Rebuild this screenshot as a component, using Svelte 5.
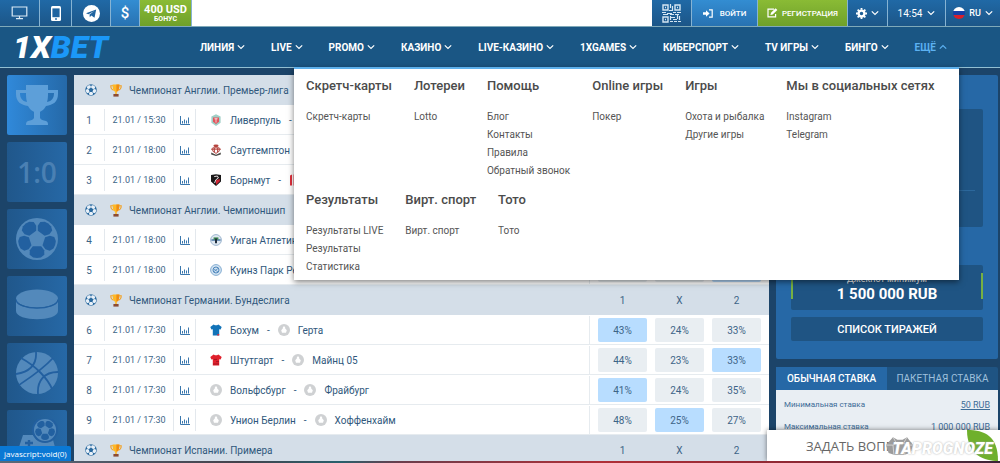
<script lang="ts">
  type Team = { name: string; icon: string };
  type Match = { n: number; time: string; home: Team; away: Team | null; odds: string[]; pick: number };
  type League = { title: string; matches: Match[] };

  const nav = ["ЛИНИЯ", "LIVE", "PROMO", "КАЗИНО", "LIVE-КАЗИНО", "1XGAMES", "КИБЕРСПОРТ", "TV ИГРЫ", "БИНГО"];

  const menu = [
    [
      { title: "Скретч-карты", links: ["Скретч-карты"] },
      { title: "Лотереи", links: ["Lotto"] },
      { title: "Помощь", links: ["Блог", "Контакты", "Правила", "Обратный звонок"] },
      { title: "Online игры", links: ["Покер"] },
      { title: "Игры", links: ["Охота и рыбалка", "Другие игры"] },
      { title: "Мы в социальных сетях", links: ["Instagram", "Telegram"] },
    ],
    [
      { title: "Результаты", links: ["Результаты LIVE", "Результаты", "Статистика"] },
      { title: "Вирт. спорт", links: ["Вирт. спорт"] },
      { title: "Тото", links: ["Тото"] },
    ],
  ];

  const tiles = ["cup", "score", "football", "puck", "basketball", "gamepad"];

  const none = ["", "", ""];
  const team = (name: string, icon = "blank"): Team => ({ name, icon });

  const leagues: League[] = [
    {
      title: "Чемпионат Англии. Премьер-лига",
      matches: [
        { n: 1, time: "21.01 / 15:30", home: team("Ливерпуль", "liverpool"), away: team(""), odds: none, pick: 0 },
        { n: 2, time: "21.01 / 18:00", home: team("Саутгемптон", "southampton"), away: null, odds: none, pick: 2 },
        { n: 3, time: "21.01 / 18:00", home: team("Борнмут", "bournemouth"), away: team("", "stripes"), odds: none, pick: 2 },
      ],
    },
    {
      title: "Чемпионат Англии. Чемпионшип",
      matches: [
        { n: 4, time: "21.01 / 18:00", home: team("Уиган Атлетик", "wigan"), away: null, odds: none, pick: 2 },
        { n: 5, time: "21.01 / 18:00", home: team("Куинз Парк Рейнджерс", "qpr"), away: null, odds: none, pick: 2 },
      ],
    },
    {
      title: "Чемпионат Германии. Бундеслига",
      matches: [
        { n: 6, time: "21.01 / 17:30", home: team("Бохум", "blue"), away: team("Герта"), odds: ["43%", "24%", "33%"], pick: 0 },
        { n: 7, time: "21.01 / 17:30", home: team("Штутгарт", "red"), away: team("Майнц 05"), odds: ["44%", "23%", "33%"], pick: 2 },
        { n: 8, time: "21.01 / 17:30", home: team("Вольфсбург"), away: team("Фрайбург"), odds: ["41%", "24%", "35%"], pick: 0 },
        { n: 9, time: "21.01 / 17:30", home: team("Унион Берлин"), away: team("Хоффенхайм"), odds: ["48%", "25%", "27%"], pick: 1 },
      ],
    },
    { title: "Чемпионат Испании. Примера", matches: [] },
  ];

  const outcomes = ["1", "X", "2"];
  const turns = [36, 108, 180, 252, 324];
</script>

{#snippet chevron(up = false)}
  <svg class="chevron" class:up viewBox="0 0 8 8" aria-hidden="true"><path d="M.8 2.4 4 5.5 7.2 2.4" /></svg>
{/snippet}

{#snippet ball(line: string, patch: string)}
  <circle cx="12" cy="12" r="12" fill={line} />
  {#each turns as turn (turn)}
    <path
      d="M-2.4-4.1-4.1-6.4-4.2-9-2.2-10.6 0-10.9 2.2-10.6 4.2-9 4.1-6.4 2.4-4.1Z"
      transform="translate(12 12) rotate({turn})"
      fill={patch}
    />
  {/each}
{/snippet}

{#snippet crest(kind: string)}
  <svg class="crest" viewBox="0 0 12 12" aria-hidden="true">
    {#if kind === "blue" || kind === "red"}
      <path
        d="M3.6.6 5 1.2h2L8.4.6 11.7 3 10.6 5.6 9.2 5.2v6.4H2.8V5.2l-1.4.4L.3 3Z"
        fill={kind === "blue" ? "#1273b8" : "#e0202c"}
      />
      {#if kind === "blue"}
        <path d="M7.6 10h1.6v1.6H7Z" fill="#d8303a" />
      {:else}
        <path d="M4 5.4h3M6 7.6h3M3 10h6" stroke="#8e0f1c" stroke-width=".7" />
      {/if}
    {:else if kind === "liverpool"}
      <path d="M1.4 2.4 6 .3l4.6 2.1v6.4L6 12 1.4 8.8Z" fill="#9fcfc6" />
      <path d="M3 3.4h6v4.4L6 10 3 7.8Z" fill="#e2545c" />
      <path d="M4.4 4.8h3.2M6 4.4v4.2" stroke="#fff" stroke-width=".7" />
    {:else if kind === "southampton"}
      <ellipse cx="6" cy="1.8" rx="2.6" ry="1.4" fill="#b5433d" />
      <path d="M2.8 3.8h6.4v3.4L6 9.4 2.8 7.2Z" fill="#fff" stroke="#b4443f" stroke-width="1" />
      <path d="M1 5.2h10M4.4 4v4M7.6 4v4" stroke="#b4443f" stroke-width="1" />
      <path d="M1.2 8.6 6 10.8l4.8-2.2v2L6 12l-4.8-1.4Z" fill="#4d4b48" />
    {:else if kind === "bournemouth"}
      <path d="M1 1 6 .2 11 1v6.4L6 12 1 7.4Z" fill="#191819" />
      <path d="M6 6.2 9.8 5v2.2L6 11Z" fill="#cf2636" />
      <path d="M4.2 2.6 7.4 2l1 2-2.6 1.8L4.6 9" fill="none" stroke="#e8dfe0" stroke-width="1" />
    {:else if kind === "stripes"}
      <path d="M1 1.5 3 .6v10.8H1ZM4.6.6h2v10.8h-2ZM8.4.6l2 .9v9.9h-2Z" fill="#e0303c" />
    {:else if kind === "wigan"}
      <circle cx="6" cy="6" r="5.4" fill="#dfe8f1" stroke="#9db6cf" />
      <path d="M1.4 5h9.2v2H1.4Z" fill="#6f93b8" />
      <path d="M3.6 3.4h4.8v2.4H3.6Z" fill="#3c8752" />
      <path d="M5 4.4h2v4.8H5Z" fill="#202f3f" />
    {:else if kind === "qpr"}
      <circle cx="6" cy="6" r="5.4" fill="#d2e3f2" stroke="#86aed2" />
      <circle cx="6" cy="6" r="3" fill="none" stroke="#4d86bb" />
      <path d="m4 5 4 3M4 7.6 8 4.4" stroke="#4d86bb" stroke-width=".8" />
    {:else}
      <circle cx="6" cy="6" r="6" fill="#cfd1d3" />
      <path d="M6 2 7.2 3.4v1.2l1.6 1.6-.8 2.6H4L3.2 6.2l1.6-1.6V3.4Z" fill="#fff" />
    {/if}
  </svg>
{/snippet}

<div class="page">
  <div class="top">
    <button class="cell w-pc" aria-label="Desktop">
      <svg width="17" height="14" viewBox="0 0 17 14"><path d="M1.2 1h14.6v9H1.2ZM8.5 10v2.4M5 12.6h7" fill="none" stroke="#d9e9f5" stroke-width="1.2" /></svg>
    </button>
    <button class="cell w-phone" aria-label="Mobile">
      <svg width="10" height="15" viewBox="0 0 10 15"><rect width="10" height="15" rx="1.5" fill="#fff" /><path d="M1.4 2.4h7.2v8.8H1.4Z" fill="#1f64a0" /><circle cx="5" cy="13" r=".9" fill="#1f64a0" /></svg>
    </button>
    <button class="cell w-tg" aria-label="Telegram">
      <svg width="17" height="17" viewBox="0 0 17 17"><circle cx="8.5" cy="8.5" r="8.5" fill="#fff" /><path d="M3 8.3 13.2 4.4 11.5 12.8 8.3 10.6 6.8 12.2 6.5 9.6 11.4 5.9 5.4 9.2Z" fill="#1f64a0" /></svg>
    </button>
    <button class="cell w-usd bright">$</button>
    <a class="cell w-bonus green bonus" href="#bonus"><b>400 USD</b><small>БОНУС</small></a>
    <div class="blank"></div>
    <button class="cell w-qr" aria-label="QR">
      <svg width="19" height="19" viewBox="0 0 19 19" fill="none" stroke="#d5e6f2">
        <path d="M1 1h5v5H1ZM13 1h5v5h-5ZM1 13h5v5H1Z" stroke-width="1.4" />
        <path d="M3 3.5h1M15 3.5h1M3 15.5h1" stroke-width="1.4" />
        <path d="M8.5 0v4M10.5 2v5M7 6.5h3M0 8.5h4M5 9.5h5M11 8.5h3M15 8.5h4M1 10.5h5M8 10.5h4M13 10.5h4M8.5 12v4M9 13.5h4M8 17.5h3M11 15.5h4M15.5 11v4M17.5 12v4M12 17.5h3M16 17.5h3" stroke-width="1.2" />
      </svg>
    </button>
    <button class="cell w-login bright">
      <svg width="10" height="9" viewBox="0 0 10 9"><path d="M0 3.2h3V1.2L6.6 4.5 3 7.8V5.8H0Z" fill="#fff" /><path d="M6 .8h3.2v7.4H6" fill="none" stroke="#fff" stroke-width="1.2" /></svg>
      <span>ВОЙТИ</span>
    </button>
    <button class="cell w-reg green">
      <svg width="11" height="10" viewBox="0 0 11 10"><path d="M7 1.2H1v7.6h7.6V6" fill="none" stroke="#fff" stroke-width="1.2" /><path d="M3.4 7 4 4.8 8.6.2l1.8 1.8-4.8 4.4Z" fill="#fff" /></svg>
      <span>РЕГИСТРАЦИЯ</span>
    </button>
    <button class="cell w-gear" aria-label="Настройки">
      <svg width="11" height="11" viewBox="0 0 12 12"><circle cx="6" cy="6" r="3.2" fill="none" stroke="#fff" stroke-width="2.6" /><path d="M6 0v2M6 10v2M0 6h2M10 6h2M1.8 1.8l1.4 1.4M8.8 8.8l1.4 1.4M1.8 10.2l1.4-1.4M8.8 3.2l1.4-1.4" stroke="#fff" stroke-width="2" /></svg>
      {@render chevron()}
    </button>
    <button class="cell w-clock">14:54 {@render chevron()}</button>
    <button class="cell w-lang">
      <svg width="12" height="12" viewBox="0 0 12 12"><clipPath id="flag"><circle cx="6" cy="6" r="6" /></clipPath><g clip-path="url(#flag)"><path d="M0 0h12v4H0Z" fill="#fff" /><path d="M0 4h12v4H0Z" fill="#1740a8" /><path d="M0 8h12v4H0Z" fill="#d8202c" /></g></svg>
      RU {@render chevron()}
    </button>
  </div>

  <header class="header">
    <a class="logo" href="#home"><span>1X</span><span class="logo-blue">BET</span></a>
    <nav class="nav">
      {#each nav as item (item)}
        <a href="#nav">{item}{@render chevron()}</a>
      {/each}
      <a class="open" href="#more">ЕЩЁ{@render chevron(true)}</a>
    </nav>

    <div class="menu">
      {#each menu as row, i (i)}
        <div class="menu-row">
          {#each row as group (group.title)}
            <section>
              <h3>{group.title}</h3>
              <ul>
                {#each group.links as link (link)}
                  <li><a href="#link">{link}</a></li>
                {/each}
              </ul>
            </section>
          {/each}
        </div>
      {/each}
    </div>
  </header>

  <div class="body">
    <aside class="tiles">
      {#each tiles as tile, i (tile)}
        <button class="tile" class:active={i === 0} aria-label={tile}>
          {#if tile === "score"}
            <span>1:0</span>
          {:else}
            <svg width="42" height="42" viewBox="0 0 42 42" aria-hidden="true">
              {#if tile === "cup"}
                <path
                  fill="#5d9fd9"
                  fill-rule="evenodd"
                  d="M10 1h22v5h10v4c0 8-5 11-12 12-2 4-5 5-6 6v6c1 2 3 2 6 3 2 1 2 2 2 4H10c0-2 0-3 2-4 3-1 5-1 6-3v-6c-1-1-4-2-6-6C5 21 0 18 0 10V6h10ZM4 9c0 5 2 8 7 9-1-3-1-6-1-9Zm28 0c0 3 0 6-1 9 5-1 7-4 7-9Z"
                />
              {:else if tile === "football"}
                <g transform="scale(1.75)">{@render ball("#5389bb", "#2260a0")}</g>
              {:else if tile === "puck"}
                <path d="M0 15v11c0 11 42 11 42 0V15c-1 11-41 11-42 0Z" fill="#5389bb" />
                <ellipse cx="21" cy="13.5" rx="21" ry="9" fill="#5389bb" />
                <path d="M0 14.5c1 11.5 41 11.5 42 0" fill="none" stroke="#2360a0" stroke-width="1.2" />
              {:else if tile === "basketball"}
                <circle cx="21" cy="21" r="21" fill="#5389bb" />
                <path
                  d="M20 0C21 14 13 20 0 22M5 6C20 14 32 27 36 37M37 6C26 18 12 27 3 33M42 20C28 20 21 29 22 42"
                  fill="none"
                  stroke="#2360a0"
                  stroke-width="1.8"
                />
              {:else}
                <path d="M7 16h10l3 4h10l6-3 4 15c1 7-5 9-9 4l-4-5H15l-4 5c-5 5-10 1-9-5Z" fill="#5389bb" />
                <path d="M13 21v7M9 24h8" stroke="#2360a0" stroke-width="2.4" />
                <circle cx="29" cy="11" r="13" fill="#2360a0" />
                <g transform="translate(18 0) scale(.92)">{@render ball("#5389bb", "#2260a0")}</g>
              {/if}
            </svg>
          {/if}
        </button>
      {/each}
    </aside>

    <main class="coupon">
      <table>
        <colgroup>
          <col class="c-num" /><col class="c-time" /><col class="c-stat" /><col />
          <col class="c-side" /><col class="c-mid" /><col class="c-side" />
        </colgroup>
        {#each leagues as league (league.title)}
          <tbody>
            <tr class="league">
              <th colspan="4" scope="rowgroup">
                <div class="league-name">
                  <svg width="12" height="12" viewBox="-.5 -.5 25 25" aria-hidden="true">{@render ball("#28699f", "#e8f0f8")}</svg>
                  <svg width="12" height="13" viewBox="0 0 12 13" aria-hidden="true">
                    <path d="M3 1.8H.8c0 3 1 4 2.8 4.4M9 1.8h2.2c0 3-1 4-2.8 4.4" fill="none" stroke="#f4a01e" stroke-width="1.1" />
                    <path d="M2.6.4h6.8c0 4-.6 6.6-2.6 7.4v2.4H5.2V7.8C3.2 7 2.6 4.4 2.6.4Z" fill="#fdb827" />
                    <path d="M6.4.4h3c0 4-.6 6.6-3 7.4Z" fill="#f08c15" />
                    <path d="M3.4 10h5.2v2.6H3.4Z" fill="#8a4b34" />
                  </svg>
                  <span>{league.title}</span>
                </div>
              </th>
              {#each outcomes as outcome (outcome)}
                <th class="odd">{outcome}</th>
              {/each}
            </tr>
            {#each league.matches as match (match.n)}
              <tr>
                <td><div class="rule">{match.n}</div></td>
                <td><div class="rule time">{match.time}</div></td>
                <td>
                  <div class="rule">
                    <svg width="10" height="9" viewBox="0 0 10 9" aria-hidden="true"><path d="M.5 0v8.5H10M2.5 5v2.5M4.5 3.5v4M6.5 4.5v3M8.5 1.5v6" fill="none" stroke="#3a77ad" /></svg>
                  </div>
                </td>
                <td>
                  <div class="teams">
                    {@render crest(match.home.icon)}
                    <span>{match.home.name}</span>
                    {#if match.away}
                      <span>-</span>
                      {@render crest(match.away.icon)}
                      <span>{match.away.name}</span>
                    {/if}
                  </div>
                </td>
                {#each match.odds as odd, i (i)}
                  <td class="odd"><button class:picked={i === match.pick} aria-label="{outcomes[i]} {odd}">{odd}</button></td>
                {/each}
              </tr>
            {/each}
          </tbody>
        {/each}
      </table>
    </main>

    <aside class="side">
      <section class="panel">
        <div class="box draw"></div>
        <div class="box jackpot">
          <div class="jackpot-in"><span>Джекпот минимум</span><strong>1 500 000 RUB</strong></div>
        </div>
        <button class="box list">СПИСОК ТИРАЖЕЙ</button>
      </section>
      <section>
        <div class="tabs">
          <button class="current">ОБЫЧНАЯ СТАВКА</button>
          <button>ПАКЕТНАЯ СТАВКА</button>
        </div>
        <dl>
          <div><dt>Минимальная ставка</dt><dd><a href="#min">50 RUB</a></dd></div>
          <div><dt>Максимальная ставка</dt><dd><a href="#max">1 000 000 RUB</a></dd></div>
        </dl>
      </section>
    </aside>
  </div>

  <div class="status">javascript:void(0)</div>
  <div class="chat">
    <button>ЗАДАТЬ ВОПРОС</button>
    <svg class="leaf" width="31" height="31" viewBox="0 0 31 31" aria-hidden="true"><path d="M0 0c18 0 31 6 31 31C18 31 0 26 0 0Z" fill="#6fb02c" /></svg>
    <div class="mark">
      <svg width="28" height="21" viewBox="0 0 32 23" aria-hidden="true">
        <path d="M8 2 13 5h6l5-3 7 9-3 9-7 2H9l-6-2-3-9Z" fill="#9c9c9c" />
        <path d="M8 2l4 7 8 0 4-7M0 11h8l4-2M31 11h-7l-4-2M9 22l-1-11M21 22l3-11" fill="none" stroke="#dadada" />
      </svg>
      <span>TAPROGNOZE</span>
    </div>
  </div>
  <div class="strip"></div>
</div>

<style>
  :global(body) {
    background: #1c4469;
  }
  .page {
    height: 100vh;
    overflow: hidden;
    position: relative;
    font-family: Roboto, "Liberation Sans", sans-serif;
    color: #3d6487;
    background: #1c4469;
  }
  .page * {
    box-sizing: border-box;
  }
  button {
    border: 0;
    padding: 0;
    background: none;
    font: inherit;
    color: inherit;
    cursor: pointer;
  }
  a {
    color: inherit;
    text-decoration: none;
  }
  svg {
    display: block;
    flex: none;
  }

  .top {
    display: flex;
    height: 27px;
    border-bottom: 1px solid #7fa9b9;
    background: #fff;
  }
  .cell {
    display: flex;
    align-items: center;
    justify-content: center;
    gap: 4px;
    flex: none;
    color: #fff;
    font-size: 9px;
    font-weight: 500;
    background: linear-gradient(#2069a6, #1c5688);
    border-right: 1px solid #86b3d3;
  }
  .cell.bright {
    background: linear-gradient(#338dd2, #2872b2);
  }
  .cell.green {
    background: linear-gradient(#8abb35, #6fa02a);
  }
  .w-pc,
  .w-qr,
  .w-gear {
    width: 40px;
  }
  .w-phone {
    width: 32px;
  }
  .w-tg {
    width: 39px;
  }
  .cell.w-usd {
    width: 29px;
    font-size: 15px;
  }
  .w-bonus {
    width: 52px;
  }
  .w-login {
    width: 66px;
  }
  .w-reg {
    width: 90px;
  }
  .cell.w-login,
  .cell.w-reg {
    font-size: 8px;
  }
  .cell.w-login {
    gap: 7px;
  }
  .cell.w-clock {
    width: 58px;
    gap: 5px;
    font-size: 10px;
    font-weight: 400;
  }
  .w-lang {
    width: 54px;
    border-right: 0;
  }
  .bonus {
    flex-direction: column;
    gap: 0;
  }
  .bonus b {
    font-size: 11px;
    line-height: 11px;
  }
  .bonus small {
    font-size: 7px;
    line-height: 8px;
    font-weight: 700;
  }
  .blank {
    flex: 1;
  }
  .chevron {
    width: 8px;
    height: 8px;
    fill: none;
    stroke: currentColor;
    stroke-width: 1.2;
  }
  .chevron.up {
    transform: rotate(180deg);
  }

  .header {
    position: relative;
    z-index: 2;
    display: flex;
    align-items: center;
    height: 41px;
    padding: 0 53px 0 13px;
    background: #1a5684;
    border-bottom: 1px solid #92bfd2;
  }
  .logo {
    font-size: 32px;
    font-weight: 900;
    font-style: italic;
    line-height: 40px;
    color: #fff;
  }
  .logo-blue {
    color: #1b98f8;
  }
  .nav {
    display: flex;
    gap: 26px;
    margin-left: auto;
    font-size: 10px;
    font-weight: 700;
    color: #fff;
  }
  .nav a {
    display: flex;
    align-items: center;
    gap: 3px;
    white-space: nowrap;
  }
  .nav .open {
    color: #5cb1f2;
  }

  .menu {
    position: absolute;
    top: 40px;
    left: 294px;
    right: 41px;
    padding: 8px 12px 4px;
    background: #fff;
    border-top: 2px solid #5db0ec;
    box-shadow: 0 2px 6px rgba(0, 0, 0, 0.5);
    color: #555;
  }
  .menu-row {
    display: flex;
    gap: 22px;
  }
  .menu-row + .menu-row {
    margin-top: 11px;
  }
  h3 {
    margin: 0 0 13px;
    font-size: 13px;
    font-weight: 500;
    line-height: 18px;
    color: #4b4b4b;
    white-space: nowrap;
  }
  ul {
    margin: 0;
    padding: 0;
    list-style: none;
    font-size: 10px;
    line-height: 18px;
    white-space: nowrap;
  }

  .body {
    display: flex;
    gap: 7px;
    padding: 7px 2px 0 7px;
  }
  .tiles {
    display: flex;
    flex-direction: column;
    flex: none;
    gap: 7px;
    width: 60px;
  }
  .tile {
    display: flex;
    align-items: center;
    justify-content: center;
    height: 60px;
    flex: none;
    border-radius: 2px;
    background: linear-gradient(90deg, #20578b, #2668a6);
    color: #4a80b3;
    font-family: "Open Sans", Roboto, sans-serif;
    font-size: 28px;
    font-weight: 600;
  }
  .tile.active {
    background: linear-gradient(90deg, #3089da, #2569a8);
  }

  .coupon {
    flex: 1;
    min-width: 0;
  }
  table {
    width: 100%;
    table-layout: fixed;
    border-collapse: collapse;
    background: #fff;
  }
  .c-num {
    width: 31px;
  }
  .c-time {
    width: 69px;
  }
  .c-stat {
    width: 22px;
  }
  .c-side {
    width: 61px;
  }
  .c-mid {
    width: 57px;
  }
  tr {
    height: 30px;
  }
  td,
  th {
    padding: 0;
    font-size: 10px;
    font-weight: 400;
    text-align: center;
  }
  td {
    box-shadow: inset 0 -1px #e6ebef;
  }
  .league {
    background: #d4dee8;
  }
  .league-name {
    display: flex;
    align-items: center;
    padding-left: 11px;
    white-space: nowrap;
  }
  .league-name svg + svg {
    margin: 0 7px 0 13px;
  }
  .rule {
    display: flex;
    align-items: center;
    justify-content: center;
    height: 22px;
    border-right: 1px solid #e3e8ed;
  }
  .time {
    font-size: 9px;
  }
  .teams {
    display: flex;
    align-items: center;
    gap: 8px;
    height: 29px;
    padding-left: 14px;
    white-space: nowrap;
    overflow: hidden;
    border-right: 1px solid #e6ebef;
  }
  .crest {
    width: 12px;
    height: 12px;
  }
  .league-name,
  .teams {
    color: #30587c;
  }
  .odd {
    padding: 0 4px;
  }
  .odd:nth-last-child(3) {
    padding-left: 8px;
  }
  .odd:last-child {
    padding-right: 8px;
  }
  .odd button {
    display: block;
    width: 100%;
    height: 24px;
    border-radius: 2px;
    background: #e9eef2;
  }
  .odd .picked {
    background: #b8ddff;
  }

  .side {
    flex: none;
    width: 222px;
    display: flex;
    flex-direction: column;
    gap: 8px;
  }
  .panel {
    display: flex;
    flex-direction: column;
    padding: 34px 15px 18px;
    border-radius: 2px;
    background: #2668a6;
    color: #fff;
  }
  .box {
    border-radius: 2px;
    background: #1f5483;
  }
  .draw {
    height: 118px;
    padding: 81px 8px 0;
  }
  .draw::before {
    content: "";
    display: block;
    border-top: 1px solid #2c689c;
  }
  .jackpot {
    margin: 38px 0 7px;
    padding: 8px 0 11px;
  }
  .jackpot-in {
    display: flex;
    flex-direction: column;
    align-items: center;
    height: 26px;
    border: solid #76b043;
    border-width: 0 2px;
    font-size: 9px;
    line-height: 12px;
  }
  .jackpot strong {
    font-size: 15px;
    line-height: 18px;
  }
  .list {
    height: 24px;
    font-size: 11px;
    font-weight: 500;
  }
  .tabs {
    display: flex;
    background: #1f5483;
    border-radius: 2px 2px 0 0;
    font-size: 10px;
    color: #9fc0dc;
  }
  .tabs button {
    flex: 1;
    height: 23px;
    white-space: nowrap;
  }
  .tabs .current {
    background: #2668a6;
    color: #fff;
    font-weight: 500;
  }
  dl {
    margin: 0;
    padding: 4px 8px 20px;
    background: #e9eef3;
    font-size: 8px;
    line-height: 22px;
    color: #3d6c97;
  }
  dl div {
    display: flex;
    justify-content: space-between;
  }
  dd {
    margin: 0;
    font-size: 9px;
  }
  dd a {
    text-decoration: underline;
  }

  .status {
    position: absolute;
    z-index: 3;
    left: 0;
    bottom: 2px;
    padding: 0 4px;
    border-radius: 0 2px 0 0;
    background: #0a78d4;
    color: #fff;
    font-family: "Open Sans", sans-serif;
    font-size: 8px;
    line-height: 15px;
  }
  .chat {
    position: absolute;
    z-index: 3;
    right: 0;
    bottom: 2px;
    width: 233px;
    height: 31px;
    background: #fff;
    box-shadow: 0 0 5px rgba(0, 0, 0, 0.5);
  }
  .chat button {
    height: 31px;
    padding-left: 39px;
    color: #666;
    font-family: "Open Sans", sans-serif;
    font-size: 13px;
  }
  .leaf {
    position: absolute;
    right: 2px;
    top: 0;
  }
  .mark {
    position: absolute;
    right: 7px;
    top: 5px;
    width: 107px;
  }
  .mark span {
    position: absolute;
    right: 0;
    top: 6px;
    color: #fff;
    font-size: 16px;
    line-height: 16px;
    font-weight: 900;
    font-style: italic;
    text-shadow: 0 0 2px #aaa;
  }
  .strip {
    position: absolute;
    z-index: 3;
    left: 0;
    right: 0;
    bottom: 0;
    height: 2px;
    background: linear-gradient(90deg, #5a6a7a 0, #44424c 24%, #28606c 34%, #6b3d4c 40%, #b03038 60%, #8e2834 80%, #3b2438 100%);
  }
</style>
